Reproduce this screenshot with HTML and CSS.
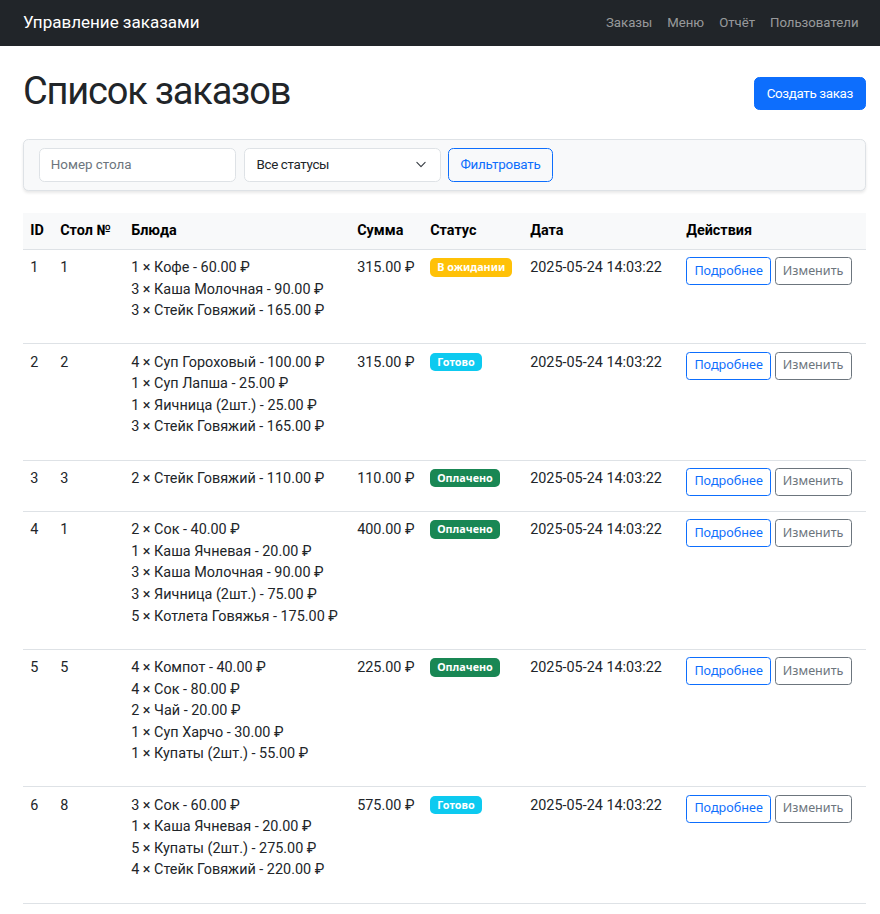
FILE: index.html
```html
<!DOCTYPE html>
<html lang="ru">
<head>
<meta charset="utf-8">
<title>Список заказов</title>
<link rel="stylesheet" href="styles.css">
</head>
<body>
<nav class="navbar">
  <a class="brand" href="#">Управление заказами</a>
  <div class="nav-links">
    <a class="nav-link" href="#">Заказы</a>
    <a class="nav-link" href="#">Меню</a>
    <a class="nav-link" href="#">Отчёт</a>
    <a class="nav-link" href="#">Пользователи</a>
  </div>
</nav>
<main class="container">
  <div class="page-head">
    <h1 class="title">Список заказов</h1>
    <a class="btn btn-primary" href="#">Создать заказ</a>
  </div>
  <form class="filter-card">
    <input class="form-control" type="text" placeholder="Номер стола">
    <div class="form-select">
      <span>Все статусы</span>
      <svg class="chev" viewBox="0 0 16 16" width="14" height="11"><path d="M2 5l6 6 6-6" fill="none" stroke="#343a40" stroke-width="1.6" stroke-linecap="round" stroke-linejoin="round"/></svg>
    </div>
    <button class="btn btn-outline-primary btn-filter" type="button">Фильтровать</button>
  </form>
  <table class="orders">
    <colgroup>
      <col class="c-id"><col class="c-table"><col class="c-dish"><col class="c-sum"><col class="c-status"><col class="c-date"><col class="c-act">
    </colgroup>
    <thead>
      <tr><th>ID</th><th>Стол №</th><th>Блюда</th><th>Сумма</th><th>Статус</th><th>Дата</th><th>Действия</th></tr>
    </thead>
    <tbody>
      <tr>
        <td>1</td><td>1</td>
        <td><ul class="dishes"><li>1 × Кофе - 60.00 ₽</li><li>3 × Каша Молочная - 90.00 ₽</li><li>3 × Стейк Говяжий - 165.00 ₽</li></ul></td>
        <td>315.00 ₽</td>
        <td><span class="badge bg-warning">В ожидании</span></td>
        <td>2025-05-24 14:03:22</td>
        <td class="actions"><a class="btn-sm btn-outline-primary" href="#">Подробнее</a><a class="btn-sm btn-outline-secondary" href="#">Изменить</a></td>
      </tr>
      <tr>
        <td>2</td><td>2</td>
        <td><ul class="dishes"><li>4 × Суп Гороховый - 100.00 ₽</li><li>1 × Суп Лапша - 25.00 ₽</li><li>1 × Яичница (2шт.) - 25.00 ₽</li><li>3 × Стейк Говяжий - 165.00 ₽</li></ul></td>
        <td>315.00 ₽</td>
        <td><span class="badge bg-info">Готово</span></td>
        <td>2025-05-24 14:03:22</td>
        <td class="actions"><a class="btn-sm btn-outline-primary" href="#">Подробнее</a><a class="btn-sm btn-outline-secondary" href="#">Изменить</a></td>
      </tr>
      <tr>
        <td>3</td><td>3</td>
        <td><ul class="dishes"><li>2 × Стейк Говяжий - 110.00 ₽</li></ul></td>
        <td>110.00 ₽</td>
        <td><span class="badge bg-success">Оплачено</span></td>
        <td>2025-05-24 14:03:22</td>
        <td class="actions"><a class="btn-sm btn-outline-primary" href="#">Подробнее</a><a class="btn-sm btn-outline-secondary" href="#">Изменить</a></td>
      </tr>
      <tr>
        <td>4</td><td>1</td>
        <td><ul class="dishes"><li>2 × Сок - 40.00 ₽</li><li>1 × Каша Ячневая - 20.00 ₽</li><li>3 × Каша Молочная - 90.00 ₽</li><li>3 × Яичница (2шт.) - 75.00 ₽</li><li>5 × Котлета Говяжья - 175.00 ₽</li></ul></td>
        <td>400.00 ₽</td>
        <td><span class="badge bg-success">Оплачено</span></td>
        <td>2025-05-24 14:03:22</td>
        <td class="actions"><a class="btn-sm btn-outline-primary" href="#">Подробнее</a><a class="btn-sm btn-outline-secondary" href="#">Изменить</a></td>
      </tr>
      <tr>
        <td>5</td><td>5</td>
        <td><ul class="dishes"><li>4 × Компот - 40.00 ₽</li><li>4 × Сок - 80.00 ₽</li><li>2 × Чай - 20.00 ₽</li><li>1 × Суп Харчо - 30.00 ₽</li><li>1 × Купаты (2шт.) - 55.00 ₽</li></ul></td>
        <td>225.00 ₽</td>
        <td><span class="badge bg-success">Оплачено</span></td>
        <td>2025-05-24 14:03:22</td>
        <td class="actions"><a class="btn-sm btn-outline-primary" href="#">Подробнее</a><a class="btn-sm btn-outline-secondary" href="#">Изменить</a></td>
      </tr>
      <tr>
        <td>6</td><td>8</td>
        <td><ul class="dishes"><li>3 × Сок - 60.00 ₽</li><li>1 × Каша Ячневая - 20.00 ₽</li><li>5 × Купаты (2шт.) - 275.00 ₽</li><li>4 × Стейк Говяжий - 220.00 ₽</li></ul></td>
        <td>575.00 ₽</td>
        <td><span class="badge bg-info">Готово</span></td>
        <td>2025-05-24 14:03:22</td>
        <td class="actions"><a class="btn-sm btn-outline-primary" href="#">Подробнее</a><a class="btn-sm btn-outline-secondary" href="#">Изменить</a></td>
      </tr>
    </tbody>
  </table>
</main>
</body>
</html>
```
FILE: styles.css
```css
* { box-sizing: border-box; }
body {
  margin: 0;
  font-family: Roboto, "Noto Sans", sans-serif;
  font-size: 14.4px;
  line-height: 1.5;
  color: #212529;
  background: #fff;
}
a { text-decoration: none; }

.navbar {
  height: 46px;
  background: #212529;
  display: flex;
  align-items: center;
  justify-content: space-between;
  padding: 0 14px 0 23px;
}
.brand {
  color: #fff;
  font-size: 17px;
  line-height: 1.5;
}
.nav-links { display: flex; }
.nav-link {
  color: rgba(255,255,255,.55);
  padding: 0 7.5px;
  font-size: 13.2px;
}

.container {
  padding: 23.2px 14px 0 23px;
}
.page-head {
  display: flex;
  align-items: center;
  justify-content: space-between;
  margin-bottom: 21.2px;
}
.title {
  margin: 0 0 3px;
  font-size: 38px;
  letter-spacing: -1.2px;
  font-weight: 400;
  line-height: 1.2;
}
.btn {
  display: inline-block;
  font-family: inherit;
  font-size: 13.4px;
  line-height: 21.6px;
  padding: 5.4px 11px;
  border: 1px solid transparent;
  border-radius: 5.4px;
  background: transparent;
  cursor: pointer;
}
.btn-primary {
  background: #0d6efd;
  border-color: #0d6efd;
  color: #fff;
  letter-spacing: -0.35px;
  padding: 5px 12px;
}
.btn-outline-primary {
  color: #0d6efd;
  border: 1px solid #0d6efd;
  background: transparent;
}
.btn-outline-secondary {
  color: #6c757d;
  border: 1px solid #6c757d;
}

.filter-card {
  display: flex;
  align-items: center;
  gap: 7.5px;
  margin: 0 0 22px;
  padding: 7.8px 15px;
  background: #f8f9fa;
  border: 1px solid #dee2e6;
  border-radius: 5.4px;
  box-shadow: 0 2px 3px rgba(0,0,0,.09);
}
.form-control, .form-select {
  width: 197px;
  height: 34px;
  font-family: inherit;
  font-size: 13.4px;
  padding: 5.4px 10.8px;
  border: 1px solid #dee2e6;
  border-radius: 5.4px;
  background: #fff;
  color: #212529;
}
.form-control::placeholder { color: #6c757d; opacity: 1; }
.form-select {
  display: flex;
  align-items: center;
  justify-content: space-between;
  line-height: 21.6px;
  padding-left: 12px;
  letter-spacing: -0.35px;
}
.chev { margin-right: 1px; }
.btn-filter {
  height: 34px;
  padding: 5.4px 11.5px;
  letter-spacing: -0.25px;
}

.orders {
  width: 100%;
  border-collapse: collapse;
  table-layout: fixed;
}
.c-id { width: 30px; }
.c-table { width: 71px; }
.c-dish { width: 226px; }
.c-sum { width: 73px; }
.c-status { width: 100px; }
.c-date { width: 156px; }
.orders th, .orders td {
  padding: 7.2px;
  text-align: left;
  vertical-align: top;
  border-bottom: 1px solid #dee2e6;
  line-height: 21.6px;
}
.orders thead th {
  background: #f8f9fa;
  font-weight: 700;
  color: #000;
  border-bottom-color: #dee2e6;
  padding-top: 7.6px;
}
.dishes {
  list-style: none;
  margin: 0 0 14.4px;
  padding: 0;
}
.badge {
  display: inline-block;
  font-family: "Noto Sans", sans-serif;
  font-size: 10.8px;
  font-weight: 700;
  line-height: 1;
  padding: 3.8px 7px;
  border-radius: 5px;
  color: #fff;
  vertical-align: 1px;
}
.bg-warning { background: #ffc107; }
.bg-info { background: #0dcaf0; }
.bg-success { background: #198754; }

.actions { white-space: nowrap; }
.btn-sm {
  display: inline-block;
  font-family: "Noto Sans", sans-serif;
  font-size: 12.6px;
  line-height: 18.9px;
  padding: 3.6px 7.2px;
  border-radius: 3.6px;
  margin-right: 3.6px;
}
```
